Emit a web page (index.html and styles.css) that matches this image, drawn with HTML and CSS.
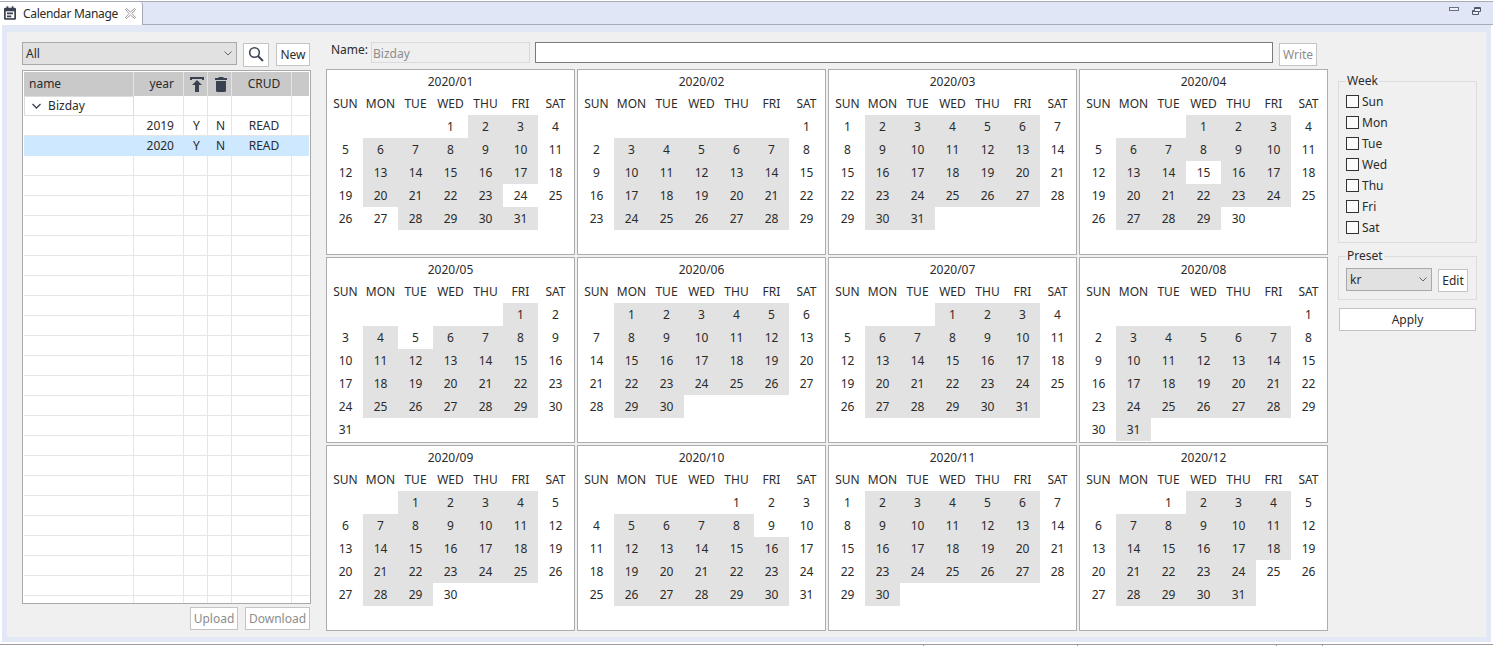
FILE: index.html
```html
<!DOCTYPE html>
<html lang="en">
<head>
  <meta charset="UTF-8">
  <title>Calendar Manage</title>
  <link rel="stylesheet" href="styles.css">
</head>
<body>

<div class="tabbar">
  <div class="tab">
    <svg class="tabIcon" width="12" height="14" viewBox="0 0 14 16">
      <path fill="#39404f" d="M3 0h2v2h4V0h2v2h1.500A1.500 1.500 0 0 1 14 3.500v11a1.500 1.500 0 0 1-1.500 1.500h-11A1.500 1.500 0 0 1 0 14.500v-11A1.500 1.500 0 0 1 1.500 2H3z"/>
      <path fill="#fff" d="M2 6h10v8H2z"/>
      <path fill="#39404f" d="M3.500 7.500h7v2h-7zM3.500 11h5v2h-5z"/>
    </svg>
    <span class="tabTitle">Calendar Manage</span>
    <svg class="tabClose" width="11" height="11" viewBox="0 0 11 11">
      <path fill="#fff" stroke="#9a9a9a" d="M.5 1.500l1-1L5.500 4l4-3.500 1 1L7 5.500l3.500 4-1 1L5.500 7l-4 3.500-1-1L4 5.500z"/>
    </svg>
  </div>
  <div class="winBtns">
    <svg width="10" height="5" viewBox="0 0 10 5"><rect x=".5" y=".5" width="9" height="3" fill="#eef0f8" stroke="#6b7080"/></svg>
    <svg width="9" height="8" viewBox="0 0 9 8"><path fill="#eef0f8" stroke="#50586a" d="M2.500.5h6v4h-2v3h-6v-4h2z"/><path stroke="#50586a" d="M.5 4.500h6M2.500 1.500h6"/></svg>
  </div>
</div>

<div class="frame">
  <div class="panel">

    <div class="leftCol">
      <div class="topRow">
        <div class="combo comboAll">
          <span>All</span>
          <svg width="8" height="5" viewBox="0 0 8 5"><path fill="none" stroke="#666" d="M.5.500L4 4 7.500.5"/></svg>
        </div>
        <button class="btn btnSearch">
          <svg width="16" height="16" viewBox="0 0 16 16"><circle cx="6.500" cy="6.500" r="4.800" fill="none" stroke="#3f4656" stroke-width="1.600"/><path stroke="#3f4656" stroke-width="2" d="M10 10l5 5"/></svg>
        </button>
        <button class="btn btnNew">New</button>
      </div>

      <div class="tableWrap">
        <table id="yearTable">
          <colgroup>
            <col class="colName"><col class="colYear"><col class="colFlag"><col class="colFlag"><col class="colCrud"><col class="colRest">
          </colgroup>
          <thead>
            <tr>
              <th class="left">name</th>
              <th class="right">year</th>
              <th class="flag">
                <svg width="14" height="15" viewBox="0 0 14 15"><path fill="#39404f" d="M0 0h14v3h-2V2H2v1H0zM7 3l5 5H9v7H5V8H2z"/></svg>
              </th>
              <th class="flag">
                <svg width="12" height="15" viewBox="0 0 12 15"><path fill="#39404f" d="M4 0h4l1 1h3v2H0V1h3zM1 4h10v9.500a1.500 1.500 0 0 1-1.500 1.500h-7A1.500 1.500 0 0 1 1 13.500z"/></svg>
              </th>
              <th class="crud">CRUD</th>
              <th></th>
            </tr>
          </thead>
          <tbody id="yearRows">
            <tr>
              <td class="left group">
                <svg width="9" height="6" viewBox="0 0 9 6"><path fill="none" stroke="#39404f" stroke-width="1.300" d="M.5 1l4 4 4-4"/></svg>
                Bizday
              </td>
              <td></td><td></td><td></td><td></td><td></td>
            </tr>
            <tr>
              <td></td><td class="right">2019</td><td class="flag">Y</td><td class="flag">N</td><td class="crud">READ</td><td></td>
            </tr>
            <tr class="selected">
              <td></td><td class="right">2020</td><td class="flag">Y</td><td class="flag">N</td><td class="crud">READ</td><td></td>
            </tr>
          </tbody>
        </table>
      </div>

      <div class="bottomRow">
        <button class="btn off btnUpload">Upload</button>
        <button class="btn off btnDownload">Download</button>
      </div>
    </div>

    <div class="centerCol">
      <div class="nameRow">
        <label class="nameLabel">Name:</label>
        <input class="nameRead" type="text" value="Bizday" readonly>
        <input class="nameEdit" type="text">
        <button class="btn off btnWrite">Write</button>
      </div>
      <div class="months" id="months"></div>
    </div>

    <div class="rightCol">
      <fieldset class="group week">
        <legend>Week</legend>
        <label class="check"><input type="checkbox"> Sun</label>
        <label class="check"><input type="checkbox"> Mon</label>
        <label class="check"><input type="checkbox"> Tue</label>
        <label class="check"><input type="checkbox"> Wed</label>
        <label class="check"><input type="checkbox"> Thu</label>
        <label class="check"><input type="checkbox"> Fri</label>
        <label class="check"><input type="checkbox"> Sat</label>
      </fieldset>
      <fieldset class="group preset">
        <legend>Preset</legend>
        <div class="presetRow">
          <div class="combo comboPreset">
            <span>kr</span>
            <svg width="8" height="5" viewBox="0 0 8 5"><path fill="none" stroke="#666" d="M.5.500L4 4 7.500.5"/></svg>
          </div>
          <button class="btn btnEdit">Edit</button>
        </div>
      </fieldset>
      <button class="btn btnApply">Apply</button>
    </div>

  </div>
</div>

<div class="statusbar">
  <div></div><div></div><div></div><div></div><div></div>
</div>

<script src="calendar.js"></script>
</body>
</html>
```

FILE: styles.css
```css
* {
  box-sizing: border-box;
}
html, body {
  height: 646px;
  overflow: hidden;
}
body {
  margin: 0;
  background: #fff;
  font-family: "Noto Sans", "Open Sans", sans-serif;
  font-size: 12px;
  color: #2b2b2b;
}

.tabbar {
  height: 24px;
  margin-top: 1px;
  display: flex;
  justify-content: space-between;
  background: #e1e6f6;
  border-top: 1px solid #a6abba;
  border-bottom: 1px solid #a6abba;
}
.tab {
  width: 143px;
  height: 23px;
  padding-left: 4px;
  padding-top: 3px;
  display: flex;
  align-items: flex-start;
  background: #fff;
  border-right: 1px solid #a6abba;
  border-top-right-radius: 3px;
  line-height: 19px;
}
.tabIcon {
  margin-top: 1px;
  margin-right: 7px;
}
.tabTitle {
  margin-top: -1px;
  letter-spacing: -0.32px;
}
.tabClose {
  margin-top: 3px;
  margin-left: 7px;
}
.winBtns {
  padding-right: 12px;
  padding-top: 5px;
  display: flex;
  gap: 13px;
  align-items: flex-start;
}

.frame {
  height: 617px;
  margin: 0 2px;
  padding: 7px 5px 5px;
  background: #e3e8f6;
}
.panel {
  height: 605px;
  padding: 10px 0 0 15px;
  display: flex;
  background: #f0f0f0;
}

.btn {
  padding: 0;
  background: #fff;
  border: 1px solid #c4c4c4;
  font: inherit;
  color: #2b2b2b;
}
.btn.off {
  color: #8c8c8c;
}

.combo {
  padding: 0 4px 0 3px;
  display: flex;
  justify-content: space-between;
  align-items: center;
  background: #e1e1e1;
  border: 1px solid #a9a9a9;
  line-height: 16px;
}

.leftCol {
  width: 289px;
  margin-right: 15px;
}
.topRow {
  height: 28px;
  display: flex;
  align-items: flex-start;
}
.comboAll {
  width: 215px;
  height: 23px;
}
.btnSearch {
  width: 26px;
  height: 24px;
  margin-top: 1px;
  margin-left: 6px;
  padding-top: 2px;
}
.btnNew {
  width: 34px;
  height: 23px;
  margin-top: 1px;
  margin-left: 7px;
}

.tableWrap {
  height: 534px;
  padding: 1px;
  overflow: hidden;
  background: #fff;
  border: 1px solid #a9a9a9;
}
table {
  width: 285px;
  table-layout: fixed;
  border-collapse: separate;
  border-spacing: 0;
}
.colName { width: 110px; }
.colYear { width: 50px; }
.colFlag { width: 24px; }
.colCrud { width: 60px; }
.colRest { width: 17px; }
th {
  height: 24px;
  padding: 0 0 2px;
  background: #c9c9c9;
  border-right: 1px solid #e4e4e4;
  font-weight: normal;
  text-align: center;
}
th svg {
  display: block;
  margin: 2px auto 0;
}
td {
  height: 20px;
  padding: 0;
  border-right: 1px solid #e6e6e6;
  border-bottom: 1px solid #e6e6e6;
  text-align: center;
  line-height: 18px;
}
th:last-child, td:last-child {
  border-right: 0;
}
.left {
  padding-left: 5px;
  text-align: left;
}
.right {
  padding-right: 9px;
  text-align: right;
}
.flag {
  padding-left: 2px;
}
.crud {
  padding-left: 5px;
}
td.group {
  padding-left: 7px;
}
td.group svg {
  margin-right: 4px;
  vertical-align: 1px;
}
.selected td {
  background: #cde8ff;
  border-color: #cde8ff;
}

.bottomRow {
  margin-top: 3px;
  padding-right: 1px;
  display: flex;
  justify-content: flex-end;
  gap: 7px;
}
.bottomRow .btn {
  height: 23px;
}
.btnUpload { width: 48px; }
.btnDownload { width: 65px; }

.centerCol {
  width: 1002px;
  margin-right: 10px;
}
.nameRow {
  height: 27px;
  padding-left: 5px;
  display: flex;
  align-items: flex-start;
}
.nameLabel {
  width: 40px;
  line-height: 15px;
}
.nameRow input {
  height: 21px;
  padding: 3px 1px 1px;
  font: inherit;
  outline: none;
}
.nameRead {
  width: 159px;
  background: #efefef;
  border: 1px solid #dadada;
  color: #8c8c8c;
}
.nameEdit {
  width: 738px;
  margin-left: 5px;
  background: #fff;
  border: 1px solid #7a7a7a;
}
.btnWrite {
  width: 38px;
  height: 23px;
  margin-top: 1px;
  margin-left: 6px;
}

.months {
  display: grid;
  grid-template-columns: repeat(4, 249px);
  grid-auto-rows: 186px;
  gap: 2px;
}
.month {
  padding: 0 1px;
  background: #fff;
  border: 1px solid #adadad;
}
.monthTitle {
  height: 22px;
  padding-top: 1px;
  text-align: center;
  line-height: 22px;
}
.monthGrid {
  display: grid;
  grid-template-columns: repeat(7, 35px);
  grid-auto-rows: 23px;
  text-align: center;
  line-height: 23px;
}
.work {
  background: #e2e2e2;
}

.rightCol {
  width: 139px;
  padding-top: 31px;
}
.group {
  margin: 0;
  min-width: 0;
  border: 1px solid #dcdcdc;
}
.group legend {
  padding: 0 1px;
  line-height: 16px;
}
.week {
  height: 170px;
  padding: 2px 0 0 7px;
}
.check {
  height: 21px;
  display: flex;
  align-items: center;
  gap: 3px;
}
.check input {
  width: 13px;
  height: 13px;
  margin: 0;
  appearance: none;
  background: #fbfbfb;
  border: 1px solid #333;
}
.preset {
  height: 52px;
  margin-top: 5px;
  padding: 4px 0 0 7px;
}
.presetRow {
  display: flex;
  align-items: flex-start;
}
.comboPreset {
  width: 86px;
  height: 23px;
}
.btnEdit {
  width: 30px;
  height: 23px;
  margin-top: 1px;
  margin-left: 6px;
}
.btnApply {
  width: 137px;
  height: 23px;
  margin: 8px 0 0 1px;
}

.statusbar {
  height: 2px;
  margin-top: 2px;
  display: grid;
  grid-template-columns: 923px 154px 199px 46px 1fr;
  border-top: 1px solid #9c9c9c;
}
.statusbar div {
  border-left: 1px solid #9c9c9c;
}
.statusbar div:first-child {
  border-left: 0;
}
```

FILE: calendar.js
```js
// weekdays that are not working days, by month
const offDays = {
  1: [1, 24, 27],
  4: [15, 30],
  5: [5],
  9: [30],
  10: [1, 2, 9],
  12: [1, 25]
};
const dayNames = ["SUN", "MON", "TUE", "WED", "THU", "FRI", "SAT"];
const year = 2020;

let months = document.getElementById("months");
for (let m = 1; m <= 12; m++) {
  let month = document.createElement("div");
  month.className = "month";

  let title = document.createElement("div");
  title.className = "monthTitle";
  title.innerText = year + "/" + String(m).padStart(2, "0");
  month.append(title);

  let grid = document.createElement("div");
  grid.className = "monthGrid";
  for (const name of dayNames) {
    let cell = document.createElement("div");
    cell.innerText = name;
    grid.append(cell);
  }

  let first = new Date(year, m - 1, 1).getDay();
  let last = new Date(year, m, 0).getDate();
  for (let i = 0; i < first; i++) {
    grid.append(document.createElement("div"));
  }
  for (let d = 1; d <= last; d++) {
    let cell = document.createElement("div");
    let dow = (first + d - 1) % 7;
    let off = offDays[m] || [];
    if (dow != 0 && dow != 6 && !off.includes(d)) {
      cell.className = "work";
    }
    cell.innerText = d;
    grid.append(cell);
  }
  month.append(grid);
  months.append(month);
}

// empty rows of the year table
let yearRows = document.getElementById("yearRows");
for (let i = 0; i < 24; i++) {
  let tr = document.createElement("tr");
  for (let c = 0; c < 6; c++) {
    tr.append(document.createElement("td"));
  }
  yearRows.append(tr);
}
```
